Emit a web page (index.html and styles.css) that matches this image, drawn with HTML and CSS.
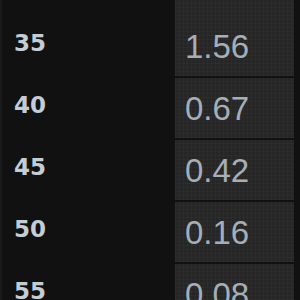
FILE: index.html
```html
<!DOCTYPE html>
<html>
<head>
<meta charset="utf-8">
<link rel="stylesheet" href="styles.css">
</head>
<body>
<div class="table">
  <div class="row partial"><div class="key"></div><div class="val"></div></div>
  <div class="row"><div class="key">35</div><div class="val">1.56</div></div>
  <div class="row"><div class="key">40</div><div class="val">0.67</div></div>
  <div class="row"><div class="key">45</div><div class="val">0.42</div></div>
  <div class="row"><div class="key">50</div><div class="val">0.16</div></div>
  <div class="row"><div class="key">55</div><div class="val">0.08</div></div>
</div>
</body>
</html>
```
FILE: styles.css
```css
html, body {
  margin: 0;
  padding: 0;
  background: #111111;
  width: 300px;
  height: 300px;
  overflow: hidden;
}
.table {
  display: flex;
  flex-direction: column;
  gap: 2px;
  border-left: 2px solid #1a1a1a;
  height: 300px;
  box-sizing: border-box;
}
.row {
  display: grid;
  grid-template-columns: 173px 119px;
  height: 60px;
  flex: none;
}
.row.partial {
  height: 14px;
}
.key {
  font-family: "DejaVu Sans", Verdana, sans-serif;
  font-weight: bold;
  font-size: 23px;
  line-height: 23px;
  color: #c4ccd4;
  padding: 16px 0 0 12px;
}
.val {
  background-color: #262626;
  background-image:
    repeating-linear-gradient(0deg, rgba(255,255,255,0.025) 0 1px, transparent 1px 4px),
    repeating-linear-gradient(90deg, rgba(255,255,255,0.025) 0 1px, transparent 1px 4px);
  font-family: "Liberation Sans", Arial, sans-serif;
  font-size: 33px;
  line-height: 33px;
  color: #a6aeb6;
  padding: 14px 0 0 10px;
  box-sizing: border-box;
}
```
